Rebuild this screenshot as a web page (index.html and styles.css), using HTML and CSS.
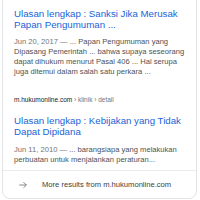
FILE: index.html
```html
<!DOCTYPE html>
<html>
<head>
<meta charset="utf-8">
<link rel="stylesheet" href="styles.css">
</head>
<body>
<div class="card">
  <div class="result first">
    <div class="title">Ulasan lengkap : Sanksi Jika Merusak Papan Pengumuman ...</div>
    <div class="snippet"><span class="date">Jun 20, 2017 — </span>... Papan Pengumuman yang Dipasang Pemerintah ... bahwa supaya seseorang dapat dihukum menurut Pasal 406 ... Hal serupa juga ditemui dalam salah satu perkara ...</div>
  </div>
  <div class="result second">
    <div class="url">m.hukumonline.com <span class="crumb">› klinik › detail</span></div>
    <div class="title">Ulasan lengkap : Kebijakan yang Tidak Dapat Dipidana</div>
    <div class="snippet"><span class="date">Jun 11, 2010 — </span>... barangsiapa yang melakukan perbuatan untuk menjalankan peraturan...</div>
  </div>
  <div class="more">
    <svg class="arrow" width="10" height="10" viewBox="0 0 24 24"><path d="M3 12h17M13 5l7 7-7 7" fill="none" stroke="#5f6368" stroke-width="1.8"/></svg>
    <span>More results from m.hukumonline.com</span>
  </div>
</div>
</body>
</html>
```
FILE: styles.css
```css
html, body {
  margin: 0;
  padding: 0;
  background: #fff;
  overflow: hidden;
}
body {
  font-family: "Liberation Sans", Arial, sans-serif;
}
.card {
  margin: -20px 3px 0 2px;
  border: 1px solid #e2e3e6;
  border-radius: 8px;
  padding-top: 27px;
}
.result {
  padding: 0 4px 0 11px;
}
.title {
  font-size: 9.7px;
  line-height: 11px;
  color: #1a64d6;
}
.snippet {
  font-size: 7.6px;
  line-height: 10px;
  color: #4d5156;
  margin-top: 7px;
}
.date {
  color: #70757a;
}
.second {
  padding-top: 18px;
}
.url {
  font-size: 6.5px;
  line-height: 10px;
  color: #202124;
  margin-bottom: 10px;
}
.crumb {
  color: #70757a;
}
.second .snippet {
  margin-top: 8px;
}
.more {
  margin-top: 5px;
  border-top: 1px solid #ebebeb;
  height: 27px;
  display: flex;
  align-items: center;
  padding-left: 15px;
  gap: 14px;
  font-size: 7.6px;
  color: #3c4043;
}
.arrow {
  flex: none;
}
```
